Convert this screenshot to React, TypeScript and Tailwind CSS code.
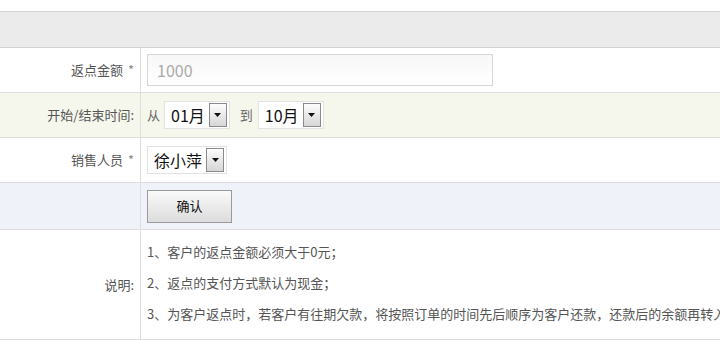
import type { ReactNode } from 'react';

const font = { fontFamily: '"Noto Sans CJK SC", "Liberation Sans", sans-serif' };

// caja tipo <select> antigua con botón gris
const FakeSelect = ({ value }: { value: string }) => (
  <div className="flex items-center h-[28px] border border-[#e2e2e2] bg-white pl-[6px] pr-[2px] gap-[4px]">
    <span className="text-[16px] text-[#111] leading-none">{value}</span>
    <span className="flex items-center justify-center w-[18px] h-[24px] border border-[#8a8a8a] bg-gradient-to-b from-[#fdfdfd] to-[#d6d6d6]">
      <svg width="7" height="4" viewBox="0 0 7 4">
        <path d="M0 0 H7 L3.5 4 Z" fill="#111" />
      </svg>
    </span>
  </div>
);

interface RowProps {
  label: ReactNode;
  bg?: string;
  height: string;
  children?: ReactNode;
}

const Row = ({ label, bg = 'bg-white', height, children }: RowProps) => (
  <div className={`flex border-b border-[#dedede] ${bg} ${height}`}>
    <div className="w-[141px] shrink-0 border-r border-[#dedede] flex items-center justify-end pr-[6px] text-[13px] text-[#555]">
      {label}
    </div>
    <div className="flex-1 flex items-center pl-[6px] min-w-0">{children}</div>
  </div>
);

export default function App() {
  return (
    <div className="w-[720px] h-[340px] bg-white overflow-hidden" style={font}>
      <div className="mt-[11px] h-[37px] bg-[#ebebeb] border-t border-b border-[#d2d2d2]" />

      <Row
        height="h-[45px]"
        label={
          <>
            返点金额<span className="ml-[5px] text-[#888]">*</span>
          </>
        }
      >
        <div className="w-[346px] h-[32px] border border-[#d6d6d6] bg-gradient-to-b from-[#f7f7f7] to-white flex items-center pl-[9px] text-[16px] text-[#aaa]">
          1000
        </div>
      </Row>

      <Row height="h-[45px]" bg="bg-[#f5f7ed]" label="开始/结束时间:">
        <span className="text-[13px] text-[#666] mr-[4px]">从</span>
        <FakeSelect value="01月" />
        <span className="text-[13px] text-[#666] ml-[10px] mr-[5px]">到</span>
        <FakeSelect value="10月" />
      </Row>

      <Row
        height="h-[45px]"
        label={
          <>
            销售人员<span className="ml-[5px] text-[#888]">*</span>
          </>
        }
      >
        <FakeSelect value="徐小萍" />
      </Row>

      <Row height="h-[47px]" bg="bg-[#eff2f9]" label="">
        <button className="w-[85px] h-[33px] border border-[#9a9a9a] bg-gradient-to-b from-[#fafafa] to-[#dcdcdc] text-[13px] text-[#111]">
          确认
        </button>
      </Row>

      <Row height="h-[110px]" label="说明:">
        <div className="flex flex-col gap-[12px] pb-[5px] text-[13px] text-[#555] whitespace-nowrap leading-[19px]">
          <p>1、客户的返点金额必须大于0元；</p>
          <p>2、返点的支付方式默认为现金；</p>
          <p>3、为客户返点时，若客户有往期欠款，将按照订单的时间先后顺序为客户还款，还款后的余额再转入客户账户；</p>
        </div>
      </Row>
    </div>
  );
}
